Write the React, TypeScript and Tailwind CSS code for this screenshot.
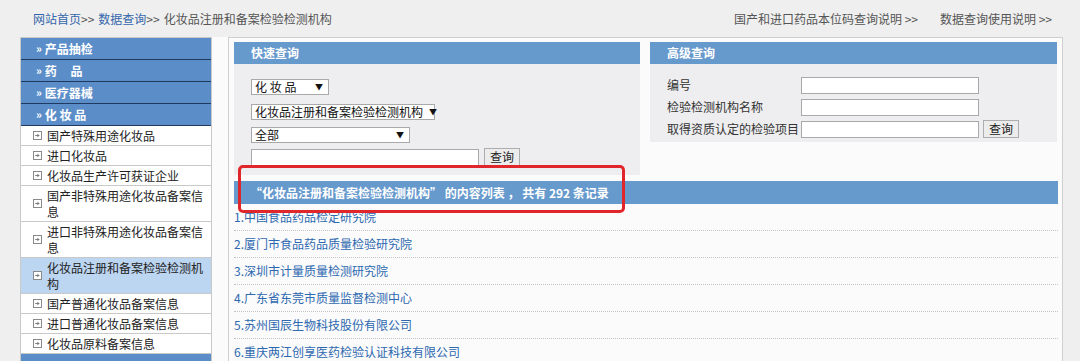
import React from "react";

function ItemIcon() {
  return (
    <svg width="9" height="9" viewBox="0 0 9 9" className="shrink-0">
      <rect x="0.5" y="0.5" width="8" height="8" fill="#fff" stroke="#8a8a8a" />
      <path d="M2.3 4.5 H5.8 M4.3 2.9 L5.9 4.5 L4.3 6.1" fill="none" stroke="#6a6a6a" strokeWidth="0.9" />
    </svg>
  );
}

function SideHeader({ label }: { label: string }) {
  return (
    <div className="flex h-[22px] items-center border-b border-[#1f3a5e] bg-[#5b8ec9] pl-[15px] text-[12px] font-bold text-white">
      {label ? <span className="mr-[3px] text-[11px]">»</span> : null}
      <span className="whitespace-pre">{label}</span>
    </div>
  );
}

function SideItem({ label, tall, active }: { label: string; tall?: boolean; active?: boolean }) {
  return (
    <div
      className={`flex items-center border-b border-[#c9c9c9] pl-[12px] pr-[4px] text-[12px] text-[#222] ${
        tall ? "h-[36px]" : "h-[20px]"
      } ${active ? "bg-[#bcd5f1]" : "bg-white"}`}
    >
      <ItemIcon />
      <span className="ml-[5px] leading-[16px]">{label}</span>
    </div>
  );
}

function Select({ label, cls }: { label: string; cls: string }) {
  return (
    <div
      className={`flex h-[16px] items-center justify-between border border-[#a9a9a9] bg-white pl-[3px] pr-[5px] text-[12px] leading-none text-[#111] ${cls}`}
    >
      <span className="whitespace-pre">{label}</span>
      <span className="ml-[6px] text-[8px]">▼</span>
    </div>
  );
}

function Button() {
  return (
    <div className="flex h-[18px] w-[36px] items-center justify-center border border-[#adadad] bg-[#ececec] text-[12px] leading-none text-[#222]">
      查询
    </div>
  );
}

const items = [
  "中国食品药品检定研究院",
  "厦门市食品药品质量检验研究院",
  "深圳市计量质量检测研究院",
  "广东省东莞市质量监督检测中心",
  "苏州国辰生物科技股份有限公司",
  "重庆两江创享医药检验认证科技有限公司",
];

export default function App() {
  return (
    <div className="h-[361px] w-[1080px] overflow-hidden bg-[#efefef] font-['Noto_Sans_CJK_SC','Noto_Sans',sans-serif] text-[12px]">
      {/* top breadcrumb bar */}
      <div className="flex h-[37px] items-center justify-between pl-[33px] pr-[28px] text-[#555]">
        <div className="flex items-center">
          <span className="text-[#3466ab]">网站首页</span>
          <span className="mr-[4px]">&gt;&gt;</span>
          <span className="text-[#3466ab]">数据查询</span>
          <span className="mr-[4px]">&gt;&gt;</span>
          <span>化妆品注册和备案检验检测机构</span>
        </div>
        <div className="flex items-center gap-[22px]">
          <span>国产和进口药品本位码查询说明 &gt;&gt;</span>
          <span>数据查询使用说明 &gt;&gt;</span>
        </div>
      </div>

      <div className="flex">
        {/* sidebar */}
        <div className="ml-[20px] w-[192px] shrink-0 border-l border-r border-t border-[#c9c9c9]">
          <SideHeader label="产品抽检" />
          <SideHeader label={"药     品"} />
          <SideHeader label="医疗器械" />
          <SideHeader label="化 妆 品" />
          <SideItem label="国产特殊用途化妆品" />
          <SideItem label="进口化妆品" />
          <SideItem label="化妆品生产许可获证企业" />
          <SideItem label="国产非特殊用途化妆品备案信息" tall />
          <SideItem label="进口非特殊用途化妆品备案信息" tall />
          <SideItem label="化妆品注册和备案检验检测机构" tall active />
          <SideItem label="国产普通化妆品备案信息" />
          <SideItem label="进口普通化妆品备案信息" />
          <SideItem label="化妆品原料备案信息" />
          <SideHeader label="" />
        </div>

        {/* main content */}
        <div className="h-[330px] w-[851px] bg-[#fbfbfb] pl-[16px]">
          <div className="relative h-full border-l border-r border-t border-[#cfcfcf] pl-[5px] pr-[4px] pt-[4px]">
            <div className="flex gap-[10px]">
              {/* quick search */}
              <div className="w-[406px]">
                <div className="flex h-[22px] items-center bg-[#6699cc] pl-[17px] text-[12px] font-bold text-white">
                  快速查询
                </div>
                <div className="h-[111px] bg-[#eeeef0] pl-[17px] pt-[15px]">
                  <Select label="化 妆 品" cls="w-[78px]" />
                  <Select label="化妆品注册和备案检验检测机构" cls="mt-[9px] w-[184px]" />
                  <Select label="全部" cls="mt-[7px] w-[159px]" />
                  <div className="mt-[5px] flex items-center gap-[5px]">
                    <div className="h-[17px] w-[228px] border border-[#a9a9a9] bg-white" />
                    <Button />
                  </div>
                </div>
              </div>

              {/* advanced search */}
              <div className="w-[407px]">
                <div className="flex h-[22px] items-center bg-[#6699cc] pl-[17px] text-[12px] font-bold text-white">
                  高级查询
                </div>
                <div className="flex h-[78px] flex-col gap-[4px] bg-[#eeeef0] pl-[17px] pt-[12px] text-[#333]">
                  <div className="flex items-center">
                    <span className="w-[134px]">编号</span>
                    <div className="h-[17px] w-[178px] border border-[#a9a9a9] bg-white" />
                  </div>
                  <div className="flex items-center">
                    <span className="w-[134px]">检验检测机构名称</span>
                    <div className="h-[17px] w-[178px] border border-[#a9a9a9] bg-white" />
                  </div>
                  <div className="flex items-center">
                    <span className="w-[134px] whitespace-nowrap">取得资质认定的检验项目</span>
                    <div className="h-[17px] w-[178px] border border-[#a9a9a9] bg-white" />
                    <div className="ml-[4px]">
                      <Button />
                    </div>
                  </div>
                </div>
              </div>
            </div>

            {/* result header */}
            <div className="mt-[6px] flex h-[23px] items-center whitespace-pre bg-[#6699cc] pl-[16px] text-[12px] font-bold text-white">
              “化妆品注册和备案检验检测机构” 的内容列表 ， 共有 292 条记录
            </div>

            {/* list */}
            <div>
              {items.map((t, i) => (
                <div
                  key={i}
                  className="flex h-[27px] items-center border-b border-dotted border-[#c4c4c4] text-[12px] text-[#2d68b0]"
                >
                  {i + 1}.{t}
                </div>
              ))}
            </div>

            {/* red highlight box */}
            <div className="pointer-events-none absolute left-[9px] top-[127px] h-[48px] w-[387px] rounded-[5px] border-[3px] border-[#e1262b]" />
          </div>
        </div>
      </div>
    </div>
  );
}
